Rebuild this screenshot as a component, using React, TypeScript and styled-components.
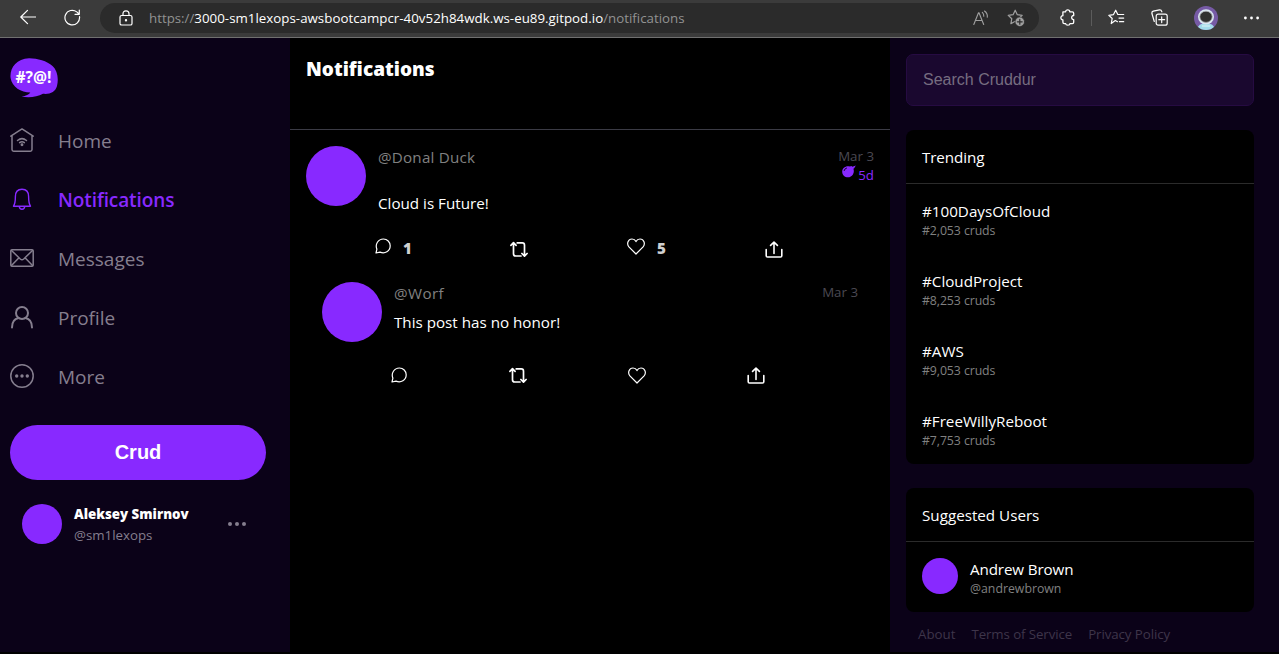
import React from "react";
import styled, { createGlobalStyle } from "styled-components";

const purple = "#8829ff";
const panelBg = "#0b0218";
const uiFont = `"Open Sans", "Noto Sans", sans-serif`;

const GlobalStyle = createGlobalStyle`
  *, *::before, *::after { box-sizing: border-box; }
  html, body, #root { height: 100%; }
  body { margin: 0; background: #000; color: #fff; font-family: ${uiFont}; overflow: hidden; }
  svg { display: block; flex: none; }
`;

const Label = styled.span<{
  $size?: number; $weight?: number; $color?: string; $spacing?: number; $line?: number;
}>`
  display: block;
  white-space: nowrap;
  font-size: ${(p) => p.$size ?? 15.2}px;
  font-weight: ${(p) => p.$weight ?? 400};
  color: ${(p) => p.$color ?? "#fff"};
  letter-spacing: ${(p) => p.$spacing ?? 0}px;
  line-height: ${(p) => p.$line ?? 20}px;
`;

/* ---------- browser bar ---------- */

const Window = styled.div`
  display: flex;
  flex-direction: column;
  height: 100%;
`;

const Toolbar = styled.header`
  flex: none;
  display: flex;
  align-items: center;
  height: 38px;
  padding: 0 20px 2px;
  background: #3b3b3b;
  border-bottom: 1px solid #707070;
`;

const NavTools = styled.div`
  display: flex;
  gap: 28px;
  width: 80px;
`;

const AddressBar = styled.div`
  display: flex;
  align-items: center;
  width: 939px;
  height: 30px;
  padding: 0 14px 0 19px;
  border-radius: 15px;
  background: #2b2b2b;
`;

const Url = styled.div`
  flex: 1;
  display: flex;
  margin-left: 16px;
`;

const AddressTools = styled.div`
  display: flex;
  align-items: center;
  gap: 18px;
`;

const RightTools = styled.div`
  display: flex;
  align-items: center;
  gap: 26px;
  padding-left: 21px;
`;

const Divider = styled.div`
  width: 1px;
  height: 16px;
  margin: 0 -10px 0 -11px;
  background: #5c5c5c;
`;

/* ---------- page ---------- */

const Page = styled.div`
  flex: 1;
  min-height: 0;
  display: grid;
  grid-template-columns: 290px 600px 1fr;
  padding-bottom: 2px;
`;

const Sidebar = styled.nav`
  padding: 20px 24px 0 10px;
  background: ${panelBg};
`;

const NavList = styled.div`
  margin-top: 12px;
`;

const NavRow = styled.a`
  display: flex;
  align-items: center;
  gap: 24px;
  height: 59px;
  ${Label} { padding-top: 2px; }
`;

const CrudButton = styled.button`
  display: block;
  width: 256px;
  height: 55px;
  margin-top: 20px;
  padding: 0 0 1px;
  border: 0;
  border-radius: 28px;
  background: ${purple};
  color: #fff;
  font: bold 20px "Liberation Sans", sans-serif;
`;

const Circle = styled.div<{ $d: number }>`
  flex: none;
  width: ${(p) => p.$d}px;
  height: ${(p) => p.$d}px;
  border-radius: 50%;
  background: ${purple};
`;

const Account = styled.div`
  display: flex;
  align-items: center;
  gap: 12px;
  padding: 22px 20px 0 12px;
  > svg { margin-left: auto; }
`;

const AccountName = styled.div`
  padding-top: 2px;
`;

const Feed = styled.main`
  background: #000;
`;

const FeedHeader = styled.div`
  height: 92px;
  padding: 18px 16px;
  border-bottom: 1px solid #3b3b45;
`;

const Activity = styled.article<{ $reply?: boolean }>`
  padding: ${(p) => (p.$reply ? "24px 32px 0" : "16px 16px 0")};
`;

const PostRow = styled.div`
  display: flex;
  gap: 12px;
`;

const PostBody = styled.div<{ $gap: number }>`
  flex: 1;
  display: flex;
  flex-direction: column;
  gap: ${(p) => p.$gap}px;
  height: 67px;
  padding-top: 1px;
`;

const PostMeta = styled.div`
  display: flex;
  flex-direction: column;
  align-items: flex-end;
`;

const Expiry = styled.div`
  display: flex;
  gap: 2px;
  height: 18px;
  margin-top: -1px;
`;

const Actions = styled.div<{ $reply?: boolean }>`
  display: grid;
  grid-template-columns: ${(p) => (p.$reply ? "118px 119px 119px 20px" : "135px 117px 138px 20px")};
  margin: ${(p) => (p.$reply ? "16px 0 0 69px" : "25px 0 0 69px")};
  align-items: center;
  height: 20px;
`;

const Action = styled.div<{ $shift?: number }>`
  display: flex;
  align-items: center;
  gap: 12px;
  > svg { position: relative; top: ${(p) => p.$shift ?? 0}px; }
`;

const Aside = styled.aside`
  padding: 16px 25px 0 16px;
  background: ${panelBg};
`;

const Search = styled.input`
  display: block;
  width: 100%;
  height: 52px;
  padding: 0 16px;
  border: 1px solid #260b42;
  border-radius: 7px;
  background: #1a082f;
  font: 16px "Liberation Sans", sans-serif;
  outline: none;
  &::placeholder { color: #766d80; opacity: 1; }
`;

const Card = styled.section<{ $height: number }>`
  height: ${(p) => p.$height}px;
  margin-top: 24px;
  border-radius: 8px;
  background: #000;
`;

const CardTitle = styled.div`
  height: 54px;
  padding: 17px 16px;
  border-bottom: 1px solid #2b2b2b;
`;

const Trend = styled.div`
  height: 70px;
  padding: 17px 16px 0;
`;

const Suggested = styled.div`
  display: flex;
  gap: 12px;
  padding: 16px 16px 0;
`;

const NameBlock = styled.div`
  padding-top: 1px;
`;

const Footer = styled.footer`
  display: flex;
  gap: 16px;
  padding: 12px 12px 0;
`;

/* ---------- drawings ---------- */

const Line = ({ w, h, color = "#fff", sw = 1.2, children }: {
  w: number; h: number; color?: string; sw?: number; children: React.ReactNode;
}) => (
  <svg width={w} height={h} viewBox={`0 0 ${w} ${h}`} fill="none" stroke={color}
    strokeWidth={sw} strokeLinecap="round" strokeLinejoin="round">{children}</svg>
);

const LogoText = styled.text`
  font: 700 16px "Open Sans", sans-serif;
  fill: #fff;
`;

const Logo = () => (
  <svg width="48" height="40" viewBox="0 0 48 40">
    <path fill={purple} d="M19 .3C27 .2 37 3 42.500 8C47 12 49 20 47 28C45.500 34 40 36.500 33 35.800C27 39 18 40.500 11.500 38.300C16 38.300 19 36.500 20.300 34.600C11 34.500 2 29 .6 20C-.6 11 6 .5 19 .3Z" />
    <LogoText x="5.500" y="25.300" textLength="36" lengthAdjust="spacingAndGlyphs">#?@!</LogoText>
  </svg>
);

const grey = "#857e8e";

const HomeIcon = () => (
  <Line w={24} h={24} color={grey} sw={1.5}>
    <path d="M.8 8.200L12 .9L23.200 8.200M2 7.500V21.500Q2 23.200 3.700 23.200H20.300Q22 23.200 22 21.500V7.500" />
    <path d="M7.500 12.500Q12 8.700 16.500 12.500M9.600 14.600Q12 12.700 14.400 14.600" />
    <circle cx="12" cy="16.700" r=".7" fill={grey} />
  </Line>
);
const BellIcon = () => (
  <Line w={24} h={24} color={purple} sw={1.4}>
    <path d="M3.500 19.200C5.300 16.500 5.400 14 5.400 9.500C5.400 5 8 2.200 12 2.200S18.600 5 18.600 9.500C18.600 14 18.700 16.500 20.500 19.200ZM9.300 19.500C9.500 23.100 14.500 23.100 14.700 19.500" />
  </Line>
);
const MailIcon = () => (
  <Line w={24} h={24} color={grey} sw={1.5}>
    <rect x=".8" y="3.700" width="22.400" height="16.600" rx="1.200" />
    <path d="M1.500 4.500L10.300 13Q12 14.500 13.700 13L22.500 4.500M1.500 19.500L8.500 12.300M22.500 19.500L15.500 12.300" />
  </Line>
);
const ProfileIcon = () => (
  <Line w={24} h={24} color={grey} sw={2}>
    <circle cx="12" cy="8" r="6" />
    <path d="M2 22.500C2 17 5 13.700 8.500 13M22 22.500C22 17 19 13.700 15.500 13" />
  </Line>
);
const MoreIcon = () => (
  <Line w={24} h={24} color={grey} sw={1.5}>
    <circle cx="12" cy="12" r="11.200" />
    <g fill={grey} stroke="none"><circle cx="6.700" cy="12" r="1.700" /><circle cx="12" cy="12" r="1.700" /><circle cx="17.300" cy="12" r="1.700" /></g>
  </Line>
);
const CommentIcon = () => (
  <Line w={16} h={16}>
    <path d="M1 15L1.900 11.200C-.2 6.200 3.200 1 8.400 1C12.200 1 15.200 4 15.200 7.800C15.200 13.300 9.800 16.200 5 14.100Z" />
  </Line>
);
const RepostIcon = () => (
  <Line w={18} h={17} sw={1.7}>
    <path d="M.9 4.300L3.500 1.700L6.100 4.300M3.500 2.200V12.700Q3.500 15 5.700 15H11M7.200 1.900H12.300Q14.500 1.900 14.500 4.200V14.600M11.900 12.500L14.500 15.100L17.100 12.500" />
  </Line>
);
const HeartIcon = () => (
  <Line w={18} h={17}>
    <path d="M9 16L1.900 8.900C-.7 5.800 1.200 1 5 1C7 1 8.300 2.200 9 3.600C9.700 2.200 11 1 13 1C16.800 1 18.700 5.800 16.100 8.900Z" />
  </Line>
);
const ShareIcon = () => (
  <Line w={18} h={17} sw={1.6}>
    <path d="M1.200 8.500V14.700Q1.200 16 2.500 16H15.500Q16.800 16 16.800 14.700V8.500M9 12.500V1.200M5.600 4.400L9 1.100L12.400 4.400" />
  </Line>
);
const BombIcon = () => (
  <svg width="14" height="13" viewBox="0 0 14 13">
    <path fill={purple} d="M8 1.600L9.200 .9L10.500 1.700L13.800 .4L12.200 3.200L11.400 3.700C13 8 10 12.300 6 12.300C2.700 12.300 .2 9.800 .2 6.700C.2 3 4 .4 8 1.600Z" />
    <path d="M2 6Q2.500 3.500 5 2.900" stroke="#000" strokeWidth=".8" fill="none" />
  </svg>
);

const starPath = "M8.200 1.200L10.300 5.700L15.200 6.300L11.600 9.700L12.500 14.700L8.200 12.300L3.900 14.700L4.800 9.700L1.200 6.300L6.100 5.700Z";

const BackIcon = () => <Line w={16} h={16}><path d="M15.500 8H.8M7.500 1.300L.8 8L7.500 14.700" /></Line>;
const ReloadIcon = () => <Line w={17} h={17}><path d="M15.500 7.700A7.300 7.300 0 1 1 12.800 2.900L15.300 5.200M15.300 1V5.300H11" /></Line>;
const LockIcon = () => (
  <Line w={14} h={16}>
    <rect x="1" y="5.500" width="12" height="9.500" rx="1.600" /><path d="M4 5.300V3.800Q4 .8 7 .8T10 3.800V5.300" />
    <circle cx="7" cy="10.300" r=".6" fill="#fff" />
  </Line>
);
const ReadAloudIcon = () => (
  <Line w={16} h={16} color="#a0a0a0" sw={1.1}>
    <path d="M.8 14.500L5.500 2.800H6L10.700 14.500M2.500 10.500H9M9.300 2.300Q11 4 10.800 6.200M11.500 1Q14.800 3.300 14.300 7.200" />
  </Line>
);
const StarPlusIcon = () => (
  <Line w={18} h={18} color="#a0a0a0">
    <path d={starPath} />
    <circle cx="12.800" cy="12.800" r="4.700" fill="#a0a0a0" stroke="#2b2b2b" strokeWidth=".6" />
    <path stroke="#2b2b2b" d="M12.800 10.400V15.200M10.400 12.800H15.200" />
  </Line>
);
const PuzzleIcon = () => (
  <Line w={16} h={17} sw={1.3}>
    <path d="M3 2.800H5.600C5.600 .3 9.800 .3 9.800 2.800H12.300Q13.700 2.800 13.700 4.200V6.500C11 6.300 11 10.800 13.700 10.600V13.300Q13.700 14.700 12.300 14.700H9.900C9.900 16.700 5.900 16.700 5.700 14.700H4.300Q2.900 14.700 2.900 13.300V10.800C.2 11 .2 6.600 2.900 6.700V3Z" />
  </Line>
);
const StarListIcon = () => (
  <Line w={17} h={17}>
    <path d="M9.500 12.700L7.300 11.500L3.200 14.500L4.200 9.500L.8 6.300L5.500 5.600L7.700 1.200L9.800 5.500H15.700M11 9.100H15.700M11.500 12.700H15.700" />
  </Line>
);
const CollectionsIcon = () => (
  <Line w={17} h={17}>
    <rect x="5.200" y="5.200" width="11" height="11" rx="2" /><path d="M10.700 7.800V13.600M7.800 10.700H13.600M3.300 12.500L.9 4.500Q.6 2.700 2.300 2.200L8.500 .9Q10.300 .7 10.900 2.800" />
  </Line>
);
const Astronaut = () => (
  <svg width="24" height="24" viewBox="0 0 24 24">
    <defs><clipPath id="face"><circle cx="12" cy="12" r="12" /></clipPath></defs>
    <g clipPath="url(#face)">
      <rect width="24" height="24" fill="#765aa5" />
      <path d="M3 24Q4 17 12 17T21 24Z" fill="#a4dcec" />
      <ellipse cx="12" cy="10.800" rx="8" ry="7.600" fill="#dbe8f2" />
      <ellipse cx="12" cy="10.800" rx="6.200" ry="5.600" fill="#30302f" stroke="#a9a9ad" strokeWidth=".8" />
      <path d="M8 20H16" stroke="#cdeef5" strokeWidth="1.500" />
    </g>
  </svg>
);
const Dots = ({ w, r, color }: { w: number; r: number; color: string }) => (
  <svg width={w} height={6} viewBox={`0 0 ${w} 6`} fill={color}>
    <circle cx={r} cy="3" r={r} /><circle cx={w / 2} cy="3" r={r} /><circle cx={w - r} cy="3" r={r} />
  </svg>
);

/* ---------- content ---------- */

const nav = [
  { name: "Home", icon: <HomeIcon /> },
  { name: "Notifications", icon: <BellIcon />, active: true },
  { name: "Messages", icon: <MailIcon /> },
  { name: "Profile", icon: <ProfileIcon /> },
  { name: "More", icon: <MoreIcon /> },
];

const trends = [
  ["#100DaysOfCloud", "#2,053 cruds"],
  ["#CloudProject", "#8,253 cruds"],
  ["#AWS", "#9,053 cruds"],
  ["#FreeWillyReboot", "#7,753 cruds"],
];

const dim = "#808080";
const faint = "#4b4952";

export default function App() {
  return (
    <Window>
      <GlobalStyle />
      <Toolbar>
        <NavTools><BackIcon /><ReloadIcon /></NavTools>
        <AddressBar>
          <LockIcon />
          <Url>
            <Label $size={13.3} $color="#929292">https://</Label>
            <Label $size={13.3} $spacing={0.02}>3000-sm1lexops-awsbootcampcr-40v52h84wdk.ws-eu89.gitpod.io</Label>
            <Label $size={13.3} $color="#929292">/notifications</Label>
          </Url>
          <AddressTools><ReadAloudIcon /><StarPlusIcon /></AddressTools>
        </AddressBar>
        <RightTools>
          <PuzzleIcon /><Divider /><StarListIcon /><CollectionsIcon /><Astronaut />
          <Dots w={15} r={1.4} color="#fff" />
        </RightTools>
      </Toolbar>
      <Page>
        <Sidebar>
          <Logo />
          <NavList>
            {nav.map((n) => (
              <NavRow key={n.name}>
                {n.icon}
                <Label $size={19} $line={26} $spacing={n.active ? -0.1 : 0} $weight={n.active ? 600 : 400} $color={n.active ? purple : grey}>{n.name}</Label>
              </NavRow>
            ))}
          </NavList>
          <CrudButton>Crud</CrudButton>
          <Account>
            <Circle $d={40} />
            <AccountName>
              <Label $size={13.3} $weight={800} $line={21}>Aleksey Smirnov</Label>
              <Label $size={13.3} $line={21} $color={grey}>@sm1lexops</Label>
            </AccountName>
            <Dots w={18} r={2} color={grey} />
          </Account>
        </Sidebar>
        <Feed>
          <FeedHeader><Label $size={19} $weight={800} $line={26}>Notifications</Label></FeedHeader>
          <Activity>
            <PostRow>
              <Circle $d={60} />
              <PostBody $gap={26}>
                <Label $color={dim} $spacing={0.2}>@Donal Duck</Label>
                <Label>Cloud is Future!</Label>
              </PostBody>
              <PostMeta>
                <Label $size={13.3} $color={faint}>Mar 3</Label>
                <Expiry><BombIcon /><Label $size={13.3} $color={purple}>5d</Label></Expiry>
              </PostMeta>
            </PostRow>
            <Actions>
              <Action $shift={-2}><CommentIcon /><Label $weight={800} $color="#d0d0d0">1</Label></Action>
              <Action $shift={1}><RepostIcon /></Action>
              <Action $shift={-2}><HeartIcon /><Label $weight={800} $color="#d0d0d0">5</Label></Action>
              <Action $shift={1}><ShareIcon /></Action>
            </Actions>
          </Activity>
          <Activity $reply>
            <PostRow>
              <Circle $d={60} />
              <PostBody $gap={9}>
                <Label $color={dim} $spacing={0.4}>@Worf</Label>
                <Label>This post has no honor!</Label>
              </PostBody>
              <PostMeta><Label $size={13.3} $color={faint}>Mar 3</Label></PostMeta>
            </PostRow>
            <Actions $reply>
              <Action><CommentIcon /></Action>
              <Action><RepostIcon /></Action>
              <Action><HeartIcon /></Action>
              <Action><ShareIcon /></Action>
            </Actions>
          </Activity>
        </Feed>
        <Aside>
          <Search placeholder="Search Cruddur" />
          <Card $height={334}>
            <CardTitle><Label $spacing={-0.1}>Trending</Label></CardTitle>
            {trends.map(([tag, count]) => (
              <Trend key={tag}>
                <Label>{tag}</Label>
                <Label $size={12.3} $line={20} $spacing={-0.08} $color={dim}>{count}</Label>
              </Trend>
            ))}
          </Card>
          <Card $height={124}>
            <CardTitle><Label>Suggested Users</Label></CardTitle>
            <Suggested>
              <Circle $d={36} />
              <NameBlock>
                <Label $spacing={-0.12}>Andrew Brown</Label>
                <Label $size={12.3} $line={20} $color={dim}>@andrewbrown</Label>
              </NameBlock>
            </Suggested>
          </Card>
          <Footer>
            <Label $size={13.3} $color="#3e354a">About</Label>
            <Label $size={13.3} $spacing={-0.1} $color="#3e354a">Terms of Service</Label>
            <Label $size={13.3} $spacing={-0.08} $color="#3e354a">Privacy Policy</Label>
          </Footer>
        </Aside>
      </Page>
    </Window>
  );
}
